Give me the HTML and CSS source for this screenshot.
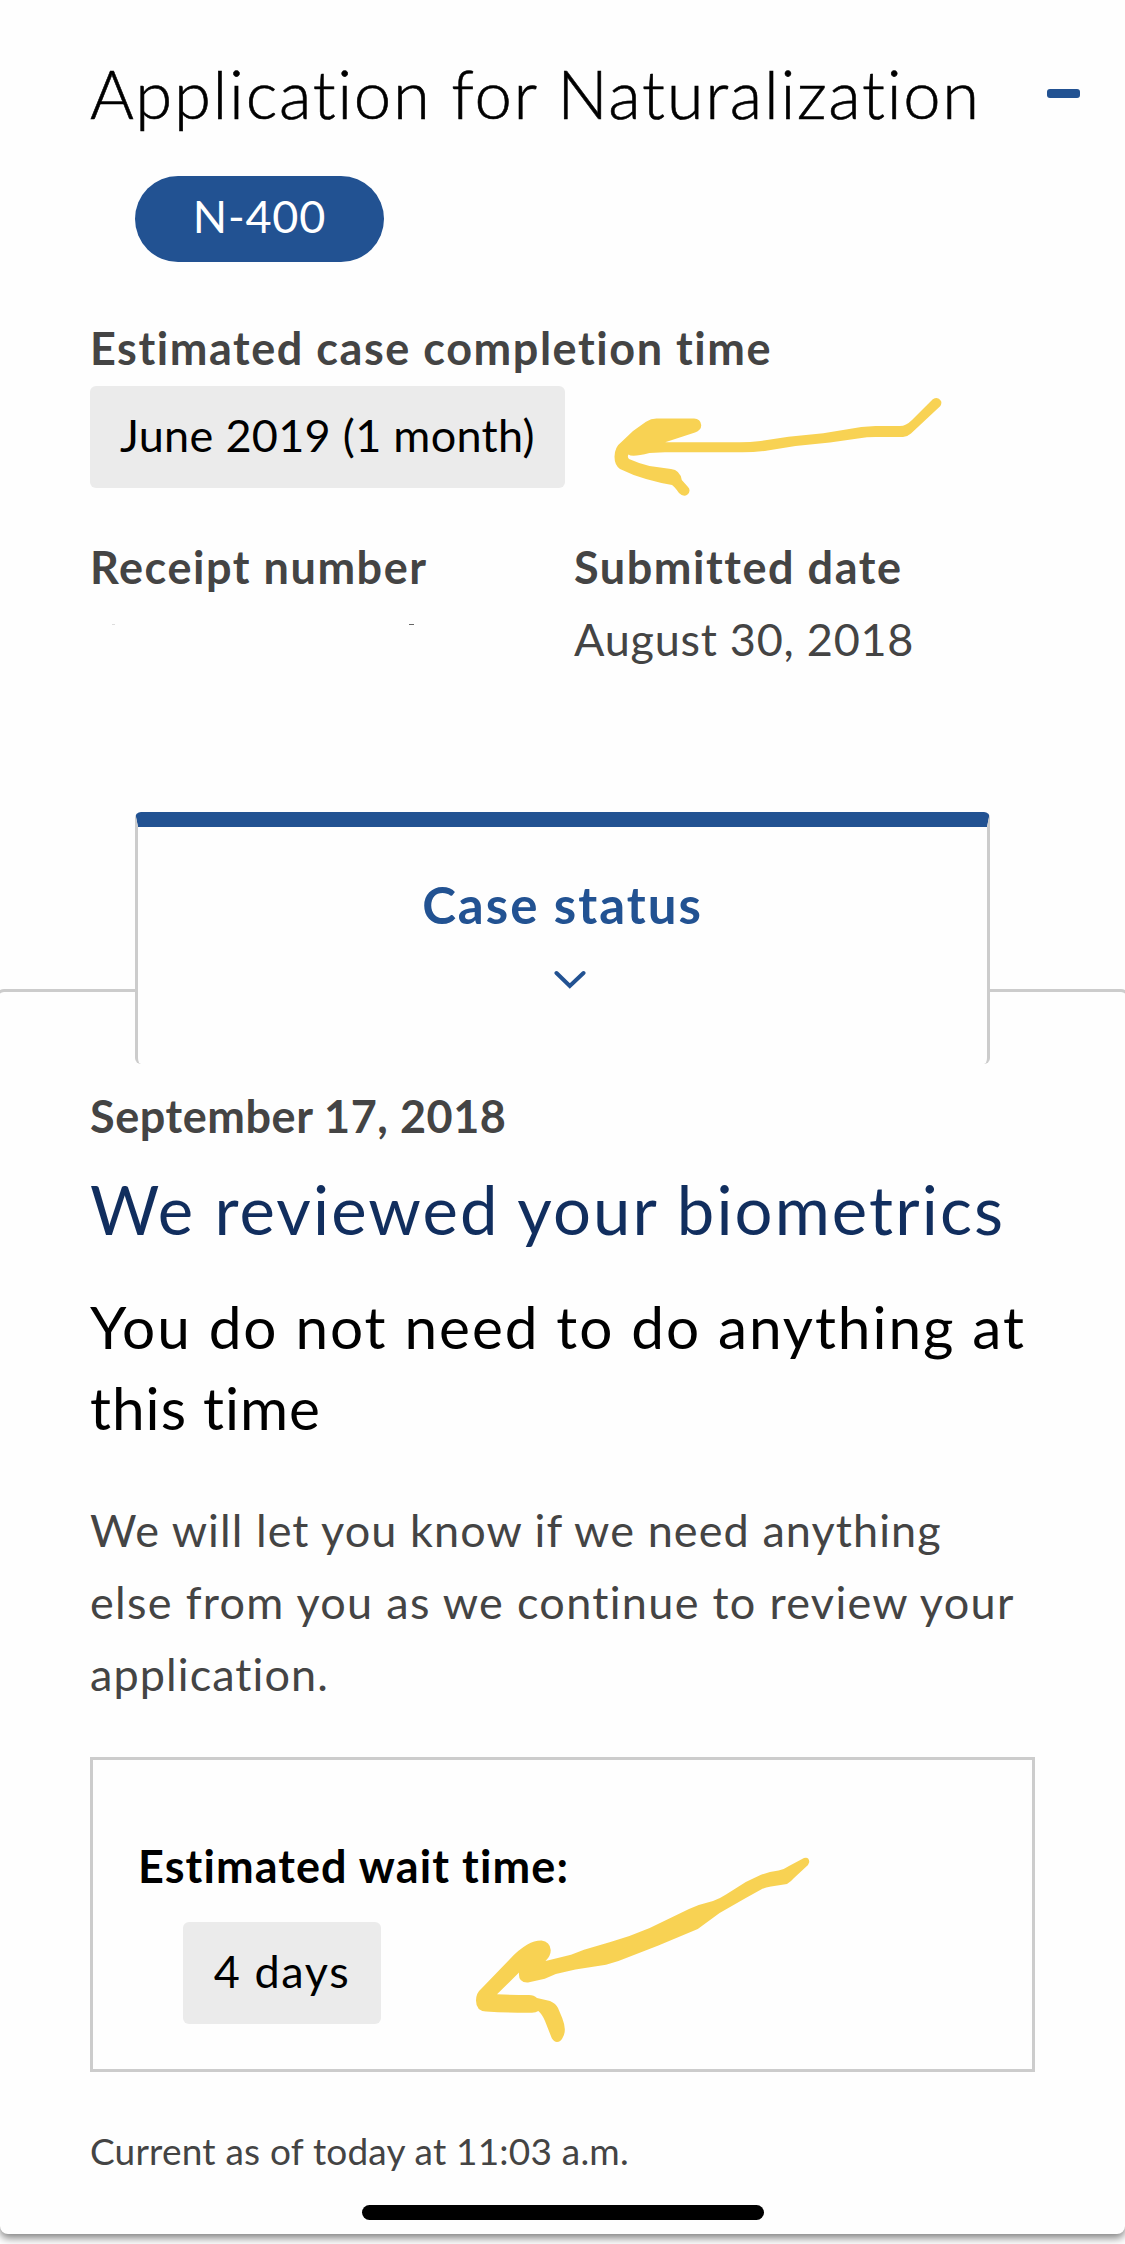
FILE: index.html
```html
<!DOCTYPE html>
<html lang="en">
<head>
    <meta charset="UTF-8">
    <meta name="viewport" content="width=device-width, initial-scale=1.0">
    <title>Application for Naturalization</title>
    <link rel="stylesheet" href="styles.css">
</head>
<body>

<main class="case-card">
    <section class="case-header">
        <div class="title-row">
            <h1>Application for Naturalization</h1>
            <span class="collapse"></span>
        </div>
        <span class="form-pill">N-400</span>

        <p class="label label-estimate">Estimated case completion time</p>
        <span class="chip">June 2019 (1 month)</span>

        <div class="details">
            <div class="detail">
                <p class="label">Receipt number</p>
                <p class="receipt-marks"><i></i><i></i></p>
            </div>
            <div class="detail">
                <p class="label">Submitted date</p>
                <p class="value">August 30, 2018</p>
            </div>
        </div>
    </section>

    <div class="tab">
        <span class="tab-name">Case status</span>
        <svg class="chevron" width="32" height="20" viewBox="0 0 32 20">
            <path d="M2.5 3 L15.8 16 L29.5 3" />
        </svg>
    </div>

    <section class="status">
        <p class="label label-date">September 17, 2018</p>
        <h2>We reviewed your biometrics</h2>
        <h3>You do not need to do anything at<br><span class="last-line">this time</span></h3>
        <p class="message">We will let you know if we need anything<br><span class="wide-line">else from you as we continue to review your</span><br>application.</p>

        <div class="wait-box">
            <p class="label label-wait">Estimated wait time:</p>
            <span class="chip chip-wait">4 days</span>
        </div>

        <p class="current">Current as of today at 11:03 a.m.</p>
    </section>
</main>

<!-- marker arrows -->
<svg class="arrow arrow-top" width="340" height="110" viewBox="610 392 340 110">
    <path d="M941 401 Q938 396 932.8 399.3 L912 420 Q906 426 900 426 L875.5 426 Q861 426.5 847.6 429.3 L823.3 433.3 L788.5 436.7 L760.7 441 Q750 442.3 739.9 442.3 L665.2 442.3 L695 432.5 Q701.5 430 701.2 425 Q700.5 418.5 694 418.5 L656.5 418.5 Q651 418.5 646 421.7 L633 431 L621.7 441.7 Q614.5 447 614.5 456.7 Q614.5 465 620 469 Q632 475 646 479 Q660 483 672 485 Q674 486 679 493 Q683.5 497.5 687.5 494.5 Q691.5 490.5 687.8 486.7 L681.8 480 Q680 470 671 469 L649.5 466 Q639 463.5 629 459 Q627 457 628.5 454.5 Q632 457.5 649.5 453 L665 452.3 L740 452.3 Q754 452.5 767.7 450.4 L795.5 446 L830 442.5 L858 438.4 Q867 437 875.5 437 L903 437 Q907 437 911 433.5 L940.4 406 Q942 403 941 401 Z" />
</svg>
<svg class="arrow arrow-bottom" width="350" height="200" viewBox="468 1850 350 200">
    <path d="M809.3 1862 Q809 1856.5 804 1858 L789 1866 Q784 1869.5 778.6 1870.5 Q769 1871.5 761 1874.8 L745.8 1882 L726 1894.5 Q720 1898.5 713 1901 Q700 1904 689 1909 L649.7 1928 Q630 1936.5 610.4 1942 L584 1949.8 L571 1954.8 L545.5 1961 Q551 1956 550.7 1950 Q550 1941.5 541.4 1940.5 Q534 1940.5 527.4 1944.5 Q518 1950 510 1959 L481.5 1988.5 Q476 1993 476 2000.5 Q476 2011 486 2011.5 Q510 2013 532 2012.8 Q536 2012.5 538.3 2011 Q542 2014 545 2021 L551.8 2038.3 Q554 2042 557 2042 Q560.5 2042 562.5 2038 Q565 2034 564.8 2029 Q564.5 2024 562.3 2018.3 L558 2008 Q556 2003.5 550 2001 L537 1998 Q534 1995 529 1995 Q515 1995 497 1994.3 L519 1972.5 Q518 1983 528 1982.5 L544.8 1978.8 L555.8 1974 L575.4 1969.5 L606 1964.8 Q620 1961 632 1955.8 L658.4 1945.5 L697.8 1929 L719.6 1913 L745.8 1898 L762 1889 Q766 1887 771 1886.5 L787 1884 Q791 1881.5 794 1878 L808 1865 Z" />
</svg>

<div class="home-bar"></div>

</body>
</html>
```
FILE: styles.css
```css
* {
    box-sizing: border-box;
}

body {
    margin: 0;
    height: 2244px;
    position: relative;
    overflow: hidden;
    background-color: #fff;
    font-family: Lato, "Open Sans", sans-serif;
    font-size: 45px;
    line-height: 54px;
    color: #444;
}

h1,
h2,
h3,
p {
    margin: 0;
    white-space: nowrap;
}

.case-card {
    height: 2234px;
    background-color: #fefefe;
    border-radius: 0 0 8px 8px;
    box-shadow: 0 4px 9px rgba(0, 0, 0, 0.5);
}

.case-header {
    padding: 53px 45px 0 90px;
    height: 812px;
}

.title-row {
    display: flex;
    justify-content: space-between;
}

h1 {
    font-size: 67px;
    line-height: 81px;
    font-weight: 300;
    letter-spacing: 1.67px;
    -webkit-text-stroke: 0.6px #000;
    color: #000;
}

.collapse {
    width: 33px;
    height: 9px;
    margin-top: 36px;
    border-radius: 3px;
    background-color: #225292;
}

.form-pill {
    display: block;
    width: 249px;
    height: 86px;
    margin: 42px 0 0 45px;
    border-radius: 43px;
    background-color: #225292;
    color: #fff;
    line-height: 80px;
    letter-spacing: 0.8px;
    text-align: center;
}

.label {
    font-weight: 700;
    letter-spacing: 1.55px;
}

.label-estimate {
    margin-top: 59px;
}

.label-date {
    letter-spacing: 0.55px;
}

.chip {
    display: block;
    width: 475px;
    height: 102px;
    margin-top: 11px;
    border-radius: 6px;
    background-color: #ebebeb;
    color: #000;
    line-height: 98px;
    letter-spacing: 0.3px;
    text-align: center;
}

.details {
    display: flex;
    margin-top: 52px;
}

.detail {
    width: 484px;
}

.value {
    margin-top: 18px;
    letter-spacing: 0.75px;
}

.receipt-marks {
    display: flex;
    justify-content: space-between;
    width: 324px;
    padding: 30px 0 0 22px;
}

.receipt-marks i {
    width: 3px;
    height: 1px;
    background-color: #ddd;
}

.receipt-marks i:last-child {
    width: 5px;
    background-color: #666;
}

.tab {
    display: flex;
    flex-direction: column;
    align-items: center;
    position: relative;
    z-index: 1;
    width: 855px;
    height: 252px;
    margin: 0 0 -75px 135px;
    padding-top: 51px;
    border: 3px solid #ccc;
    border-top: 15px solid #225292;
    border-bottom: 0;
    border-radius: 6px;
    background-color: #fefefe;
}

.tab-name {
    font-size: 51px;
    font-weight: 700;
    letter-spacing: 2px;
    color: #225292;
}

.chevron {
    margin: 38px 0 0 14px;
    fill: none;
    stroke: #225292;
    stroke-width: 4;
    stroke-linecap: round;
}

.status {
    margin: 0 -5px;
    padding: 97px 92px 0;
    border: 3px solid #ccc;
    border-bottom: 0;
    border-radius: 9px 9px 0 0;
}

h2 {
    margin-top: 26px;
    font-size: 67px;
    line-height: 81px;
    font-weight: 400;
    letter-spacing: 2.1px;
    color: #112e5e;
}

h3 {
    margin-top: 36px;
    font-size: 58.5px;
    line-height: 81px;
    font-weight: 400;
    letter-spacing: 1.95px;
    color: #000;
}

.last-line {
    letter-spacing: 1px;
}

.message {
    margin-top: 46px;
    line-height: 72px;
    letter-spacing: 1.08px;
}

.wide-line {
    letter-spacing: 1.31px;
}

.wait-box {
    width: 945px;
    height: 315px;
    margin-top: 47px;
    padding: 79px 0 0 45px;
    border: 3px solid #ccc;
}

.label-wait {
    letter-spacing: 1.1px;
    color: #000;
}

.chip-wait {
    width: 198px;
    margin: 29px 0 0 45px;
    line-height: 98px;
    letter-spacing: 1.6px;
}

.current {
    margin-top: 52px;
    font-size: 37px;
    letter-spacing: 0.2px;
}

/* hand drawn arrows lie over the page */
.arrow {
    position: absolute;
    z-index: 2;
    fill: #f8d253;
}

.arrow-top {
    left: 610px;
    top: 392px;
}

.arrow-bottom {
    left: 468px;
    top: 1850px;
}

.home-bar {
    position: absolute;
    z-index: 3;
    left: 362px;
    top: 2205px;
    width: 402px;
    height: 15px;
    border-radius: 8px;
    background-color: #000;
}
```
